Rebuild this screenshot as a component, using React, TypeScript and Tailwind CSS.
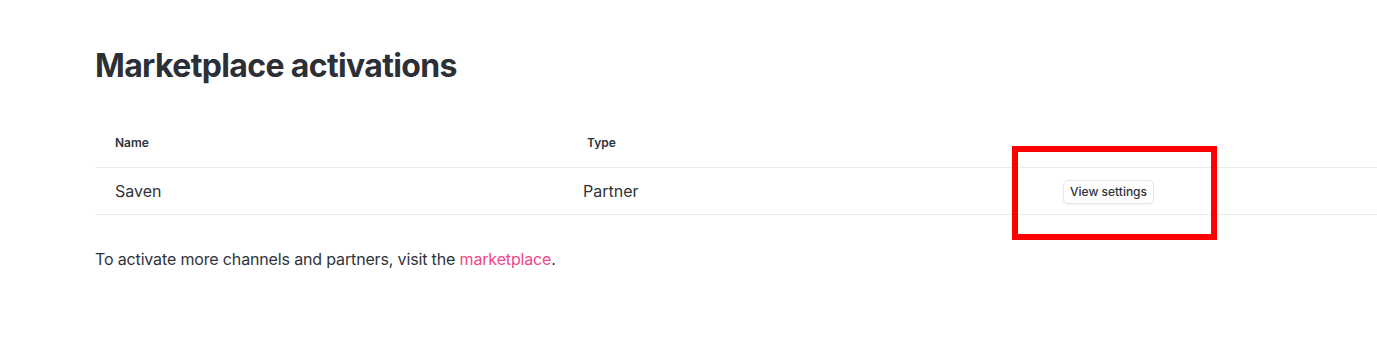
import React from "react";

const rows = [{ name: "Saven", type: "Partner" }];

const App = () => {
    return (
        <div
            className="relative min-h-[351px] bg-white pl-[95px] pt-[44px] text-[#30333a]"
            style={{ fontFamily: "Inter, 'Noto Sans', sans-serif" }}
        >
            <h1 className="text-[32px] font-bold leading-[44px] tracking-[-0.02em] text-[#2c2f36]">
                Marketplace activations
            </h1>

            {/* Table */}
            <div className="mt-[30px]">
                <div className="grid grid-cols-[472px_476px_1fr] h-[50px] items-center border-b border-[#ececec] text-[12px] font-semibold text-[#2f323a]">
                    <div className="pl-[20px]">Name</div>
                    <div className="pl-[20px]">Type</div>
                    <div></div>
                </div>
                {rows.map((row) => (
                    <div
                        key={row.name}
                        className="grid grid-cols-[472px_476px_1fr] h-[47px] items-center border-b border-[#ececec] text-[16px]"
                    >
                        <div className="pl-[20px]">{row.name}</div>
                        <div className="pl-[16px]">{row.type}</div>
                        <div className="pl-[20px]">
                            <button className="h-[24px] rounded-[5px] border border-[#e6e6e6] bg-white px-[6px] text-[12px] font-medium text-[#2f323a] shadow-[0_1px_2px_rgba(0,0,0,0.06)]">
                                View settings
                            </button>
                        </div>
                    </div>
                ))}
            </div>

            <p className="mt-[32px] text-[16px] tracking-[-0.15px] text-[#30333a]">
                To activate more channels and partners, visit the{" "}
                <a href="#" className="text-[#f0478a]">
                    marketplace
                </a>
                .
            </p>

            {/* annotation box */}
            <div className="absolute left-[1012px] top-[146px] h-[94px] w-[205px] border-[6px] border-[#ff0000]"></div>
        </div>
    );
};

export default App;
